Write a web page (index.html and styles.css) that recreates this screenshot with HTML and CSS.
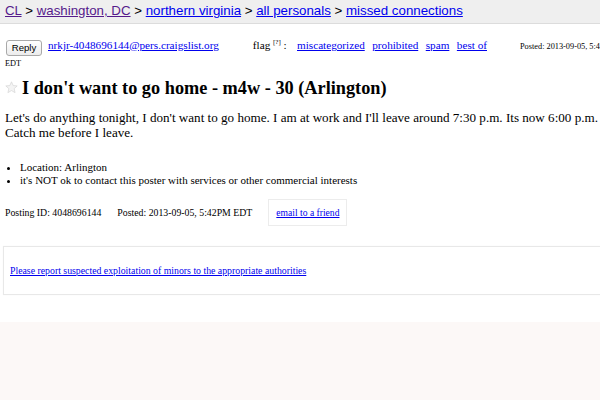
FILE: index.html
```html
<!DOCTYPE html>
<html>
<head>
<meta charset="utf-8">
<title>I don't want to go home - m4w - 30 (Arlington)</title>
<link rel="stylesheet" href="styles.css">
</head>
<body>
<div class="page">
  <header class="bchead">
    <a class="v" href="#">CL</a> &gt; <a class="v" href="#">washington, DC</a> &gt; <a href="#">northern virginia</a> &gt; <a href="#">all personals</a> &gt; <a href="#">missed connections</a>
  </header>

  <section class="replybar">
    <span class="btn">Reply</span><a class="mail" href="#">nrkjr-4048696144@pers.craigslist.org</a><span class="flags">flag <sup>[?]</sup> : <a href="#">miscategorized</a><a href="#">prohibited</a><a href="#">spam</a><a href="#">best of</a></span><span class="posted">Posted: 2013-09-05, 5:42PM EDT</span>
  </section>

  <h2 class="title"><span class="star"><svg width="13" height="13" viewBox="0 0 24 24"><path d="M12 1.5l3.1 6.9 7.4.7-5.6 5 1.7 7.4L12 17.6l-6.6 3.9 1.7-7.4-5.6-5 7.4-.7z" fill="#f4f4f4" stroke="#d6d6d6" stroke-width="1.3"/></svg></span>I don't want to go home - m4w - 30 (Arlington)</h2>

  <p class="body">Let's do anything tonight, I don't want to go home. I am at work and I'll leave around 7:30 p.m. Its now 6:00 p.m. Catch me before I leave.</p>

  <ul class="notices">
    <li>Location: Arlington</li>
    <li>it's NOT ok to contact this poster with services or other commercial interests</li>
  </ul>

  <div class="postinginfos">
    <span>Posting ID: 4048696144</span>
    <span>Posted: 2013-09-05, 5:42PM EDT</span>
    <span class="friend"><a href="#">email to a friend</a></span>
  </div>

  <div class="report"><a href="#">Please report suspected exploitation of minors to the appropriate authorities</a></div>
</div>
<footer class="foot"></footer>
</body>
</html>
```

FILE: styles.css
```css
html, body {
  margin: 0;
  padding: 0;
  overflow: hidden;
  background: #ffffff;
}
body {
  width: 660px;
  height: 400px;
  font-family: "Liberation Serif", "Times New Roman", serif;
  color: #000;
}
a { color: #0000ee; }
a.v { color: #551a8b; }

.page {
  height: 322px;
}

.bchead {
  height: 23px;
  background: #efefef;
  border-bottom: 1px solid #dcdcdc;
  font-family: "Liberation Sans", Arial, sans-serif;
  font-size: 13.3px;
  line-height: 22px;
  padding-left: 5px;
}

.replybar {
  margin-top: 15px;
  padding-left: 5px;
  width: 615px;
  font-size: 11.2px;
  line-height: 13px;
}
.btn {
  display: inline-block;
  width: 34px;
  height: 14px;
  margin-left: 1px;
  border: 1px solid #a9a9a9;
  border-radius: 3px;
  background: linear-gradient(#ffffff, #ececec);
  font-family: "Liberation Sans", Arial, sans-serif;
  font-size: 9.6px;
  line-height: 14px;
  text-align: center;
  vertical-align: -2px;
}
.mail { margin-left: 6px; }
.flags { margin-left: 34px; }
.flags sup { font-size: 7px; line-height: 0; }
.flags a { margin-left: 7.5px; }
.flags a:first-child { margin-left: 0; }
.posted {
  margin-left: 33px;
  font-size: 8.3px;
}

.title {
  margin: 7px 0 0;
  padding-left: 5px;
  font-size: 18.3px;
  line-height: 22px;
  font-weight: bold;
}
.star {
  display: inline-block;
  width: 13px;
  margin-right: 4px;
}

.body {
  margin: 12px 0 0;
  padding-left: 5px;
  width: 615px;
  font-size: 13.1px;
  line-height: 14.5px;
}

.notices {
  margin: 21px 0 0;
  padding-left: 20px;
  font-size: 11px;
  line-height: 13.3px;
}

.postinginfos {
  margin-top: 11px;
  padding-left: 5px;
  display: flex;
  align-items: center;
  font-size: 9.8px;
}
.postinginfos span { margin-right: 16px; }
.friend {
  border: 1px solid #ececec;
  padding: 7px 7px 6px;
  line-height: 12px;
  font-size: 9.6px;
}

.report {
  margin: 20px 0 0 3px;
  height: 47px;
  border: 1px solid #e8e8e8;
  box-shadow: 0 0 1px #f2f2f2;
  font-size: 9.8px;
  line-height: 47px;
  padding-left: 6px;
}

.foot {
  height: 78px;
  background: #fcf8f7;
}
```
